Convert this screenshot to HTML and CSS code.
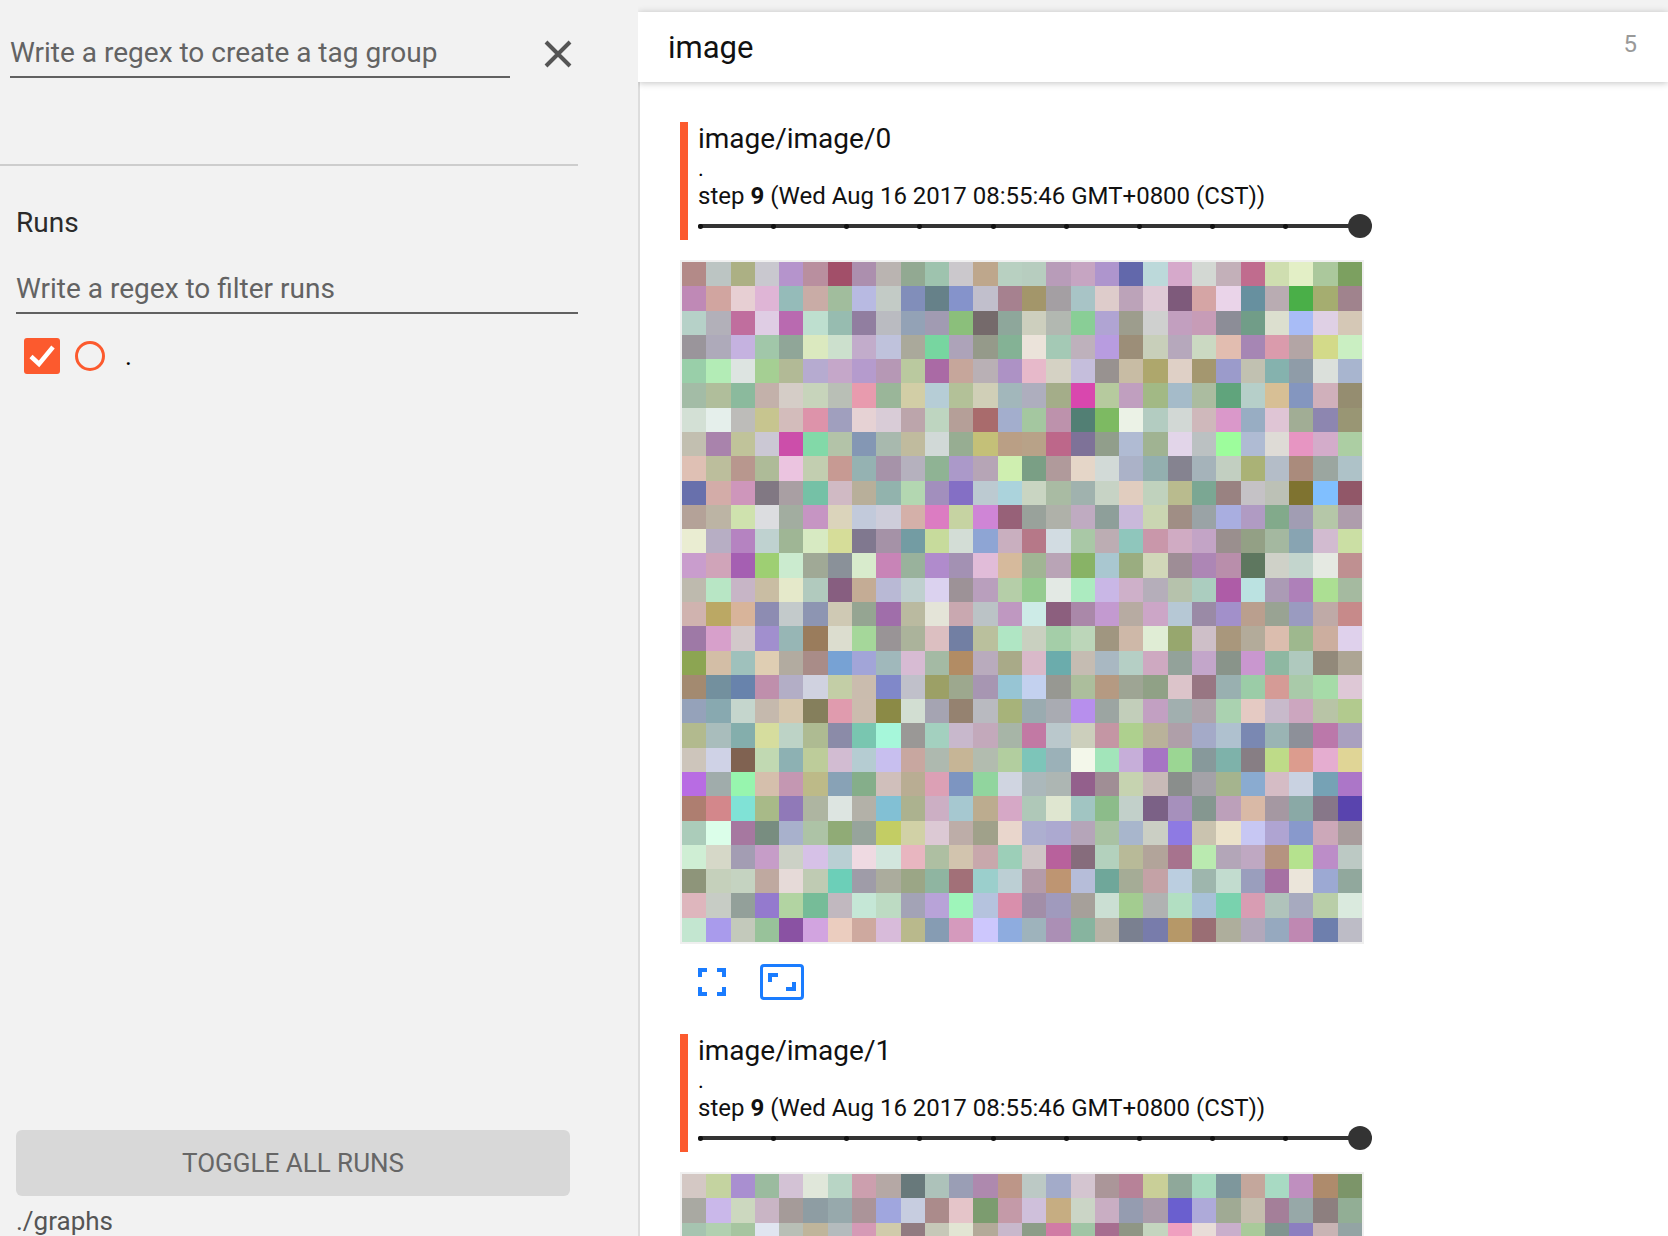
FILE: index.html
```html
<!DOCTYPE html>
<html lang="en">
<head>
<meta charset="utf-8">
<title>TensorBoard images</title>
<link rel="stylesheet" href="styles.css">
</head>
<body>
<div class="app">
  <aside class="sidebar">
    <div class="tag-filter">
      <div class="field tag-field">Write a regex to create a tag group</div>
      <svg class="close-icon" viewBox="0 0 28 28" aria-hidden="true"><path d="M2 2 26 26M26 2 2 26"/></svg>
    </div>
    <div class="sidebar-rule"></div>
    <section class="runs">
      <h3 class="runs-title">Runs</h3>
      <div class="field run-field">Write a regex to filter runs</div>
      <div class="run-row">
        <span class="check"><svg viewBox="0 0 36 36" aria-hidden="true"><path d="M7 18.5 15 26 29 9"/></svg></span>
        <span class="radio"></span>
        <span class="run-name">.</span>
      </div>
    </section>
    <div class="toggle-btn">TOGGLE ALL RUNS</div>
    <div class="logdir">./graphs</div>
  </aside>
  <main class="content">
    <div class="pane-top">
      <header class="pane-head"><span class="pane-title">image</span><span class="pane-count">5</span></header>
    </div>
    <div class="cards">
      <article class="card">
        <div class="card-head">
          <div class="tag-name">image/image/0</div>
          <div class="run-label">.</div>
          <div class="step-line">step <b>9</b> (Wed Aug 16 2017 08:55:46 GMT+0800 (CST))</div>
          <div class="slider"><span class="tick"></span><span class="tick"></span><span class="tick"></span><span class="tick"></span><span class="tick"></span><span class="tick"></span><span class="tick"></span><span class="tick"></span><span class="tick"></span><span class="knob"></span></div>
        </div>
        <div class="mosaic-frame"><div class="mosaic" data-image="0"></div></div>
        <div class="card-actions">
          <svg class="icon-actual" viewBox="0 0 28 28" aria-hidden="true"><path d="M9 2H2V9M19 2H26V9M2 19V26H9M26 19V26H19"/></svg>
          <span class="icon-fit"><svg viewBox="0 0 44 36" aria-hidden="true"><path d="M18 11H10V18M26 25H34V18"/></svg></span>
        </div>
      </article>
      <article class="card">
        <div class="card-head">
          <div class="tag-name">image/image/1</div>
          <div class="run-label">.</div>
          <div class="step-line">step <b>9</b> (Wed Aug 16 2017 08:55:46 GMT+0800 (CST))</div>
          <div class="slider"><span class="tick"></span><span class="tick"></span><span class="tick"></span><span class="tick"></span><span class="tick"></span><span class="tick"></span><span class="tick"></span><span class="tick"></span><span class="tick"></span><span class="knob"></span></div>
        </div>
        <div class="mosaic-frame"><div class="mosaic" data-image="1"></div></div>
      </article>
    </div>
  </main>
</div>
<script src="mosaic.js"></script>
</body>
</html>
```
FILE: styles.css
```css
* { box-sizing: border-box; }
html, body { margin: 0; height: 100%; overflow: hidden; }
body { font-family: Roboto, "Liberation Sans", sans-serif; background: #fff; color: #000; }

.app { display: flex; width: 1668px; height: 1236px; overflow: hidden; }

.sidebar {
  width: 638px; flex: none; height: 1236px; background: #f2f2f2;
  display: flex; flex-direction: column; overflow: hidden;
}
.tag-filter { display: flex; align-items: center; height: 78px; padding: 26px 0 0 10px; flex: none; }
.field { color: #636363; font-size: 28px; line-height: 34px; border-bottom: 2px solid #616161; }
.tag-field { width: 500px; height: 52px; padding-top: 10px; align-self: flex-end; }
.close-icon { width: 28px; height: 28px; margin-left: 34px; fill: none; stroke: #555; stroke-width: 4; margin-top: 4px; }
.sidebar-rule { width: 578px; height: 2px; background: #cdcdcd; margin-top: 86px; flex: none; }
.runs { padding: 0 0 0 16px; flex: none; width: 578px; }
.runs-title { margin: 40px 0 0; font-size: 28px; line-height: 34px; font-weight: 400; color: #2b2b2b; }
.run-field { margin-top: 29px; height: 45px; padding-top: 3px; }
.run-row { display: flex; align-items: center; padding: 24px 0 0 8px; }
.check { width: 36px; height: 36px; background: #fc5a2e; border-radius: 3px; display: block; flex: none; }
.check svg { display: block; width: 36px; height: 36px; fill: none; stroke: #fff; stroke-width: 4.500; }
.radio { width: 30px; height: 30px; border: 3px solid #fc5a2e; border-radius: 50%; margin-left: 15px; flex: none; }
.run-name { font-size: 26px; line-height: 36px; margin-left: 20px; color: #000; }
.toggle-btn {
  margin: auto 0 0 16px; width: 554px; height: 66px; flex: none; background: #d8d8d8; border-radius: 6px;
  color: #666; font-size: 26px; line-height: 66px; text-align: center;
}
.logdir { margin-left: 16px; margin-top: 8px; height: 32px; flex: none; font-size: 26px; line-height: 34px; color: #555; }

.content { flex: 1; min-width: 0; height: 1236px; background: #fff; overflow: hidden; display: flex; flex-direction: column; }
.pane-top { background: #f2f2f2; padding-top: 12px; position: relative; z-index: 1; flex: none; }
.pane-head {
  height: 70px; background: #fff; box-shadow: 0 1px 7px rgba(0,0,0,.24);
  display: flex; justify-content: space-between; align-items: flex-start; padding: 0 31px 0 30px;
}
.pane-title { font-size: 31px; line-height: 38px; margin-top: 17px; color: #111; }
.pane-count { font-size: 24px; line-height: 28px; margin-top: 18px; color: #999; }

.cards { flex: 1; min-height: 0; border-left: 2px solid #ddd; padding: 40px 0 0 40px; }
.card { width: 692px; }
.card-head { border-left: 8px solid #fc5a2e; height: 118px; padding-left: 10px; }
.tag-name { font-size: 28px; line-height: 34px; color: #111; }
.run-label { font-size: 22px; line-height: 22px; height: 22px; margin-top: 2px; color: #000; }
.step-line { font-size: 24px; line-height: 30px; margin-top: 1px; color: #111; }
.step-line b { font-weight: 700; }
.slider {
  position: relative; height: 4px; margin-top: 13px; width: 674px; background: #333; border-radius: 2px;
  display: flex; justify-content: space-between; align-items: center; padding-right: 84px;
}
.tick { width: 5px; height: 5px; background: #111; border-radius: 50%; }
.knob { position: absolute; right: 0; top: -10px; width: 24px; height: 24px; background: #333; border-radius: 50%; }
.mosaic-frame { width: 684px; height: 684px; margin-top: 20px; border: 2px solid #efefef; }
.mosaic { width: 680px; height: 680px; display: grid; grid-template-columns: repeat(28, 1fr); grid-template-rows: repeat(28, 1fr); }
.card-actions { display: flex; align-items: center; height: 36px; margin-top: 20px; padding-left: 18px; margin-bottom: 34px; }
.icon-actual { width: 28px; height: 28px; fill: none; stroke: #1a7cff; stroke-width: 4; flex: none; }
.icon-fit { display: block; width: 44px; height: 36px; margin-left: 34px; border: 3px solid #1a7cff; border-radius: 4px; flex: none; }
.icon-fit svg { display: block; margin: -3px; width: 44px; height: 36px; fill: none; stroke: #1a7cff; stroke-width: 4; }
```
FILE: mosaic.js
```js
var IMAGES = [
"b38a88 bcc5c3 acb084 c9c8cf b594cc b98f9f a24f69 ac8fae bab4b1 92a992 9ec3ae cbc8cc bea78c b8d0c1 b7cdbf b89cb9 c6a5c2 ae95cd 6268ab bcd9da d6a9cb d3d8d3 c3b0b9 c06c8e cfdeb0 e3efc6 abc89c 7ca060 " +
"bf89b6 d1a5a0 e7cfd3 dfb5d6 95bbb9 c9aca6 a1bd9d b8bae2 c3cbc6 818eba 668189 8593cb c1bfcc a6818f a3966a a49fa3 a8c4c6 decccb bca3b9 dfcad6 7e5a7b d5a5a5 ead4e9 67909f b9acb2 4aaf48 a5ad70 a0838d " +
"b6d1c8 b2b0b9 c06e9e dfcde4 b96ab0 bedfcf 97bcb0 917ea0 babbc1 93a2b6 a19bb2 8bbf7b 756a6b 8ea79b cdcfbe b2b8b1 89ce96 b0a4d3 9d9d8d cfd0cf c29fbf c79cb7 8c8d97 719d88 dcdfcf a8bcf6 dfd0e5 d5c8b6 " +
"9a959b aeaaba c5b2e0 a1c7a9 90a698 dbe9bf cce0cd c2accb bfc2dc aaa99b 77d6a0 ada3b9 959a8a 84b295 ebe3da a4c9b5 beb1bc b89ce0 9c8e78 c8cfba b6a8bc cbd9c2 e2bdb0 a686b4 da9bac b3a5a5 d3da89 caefc2 " +
"99cfa9 b3ecb6 dde4e1 a5cf93 b2ba96 b6abd0 c5a7c9 b59bcd b698b5 bac99f aa6aa5 c6a69b b9b0b5 ad92c5 e7b9ca d5d2c4 c5bedc 989290 c8bca4 aea76c dfd0c6 a4976f 9b9bcb c1c1b1 85b2ae 8f9ca8 dbe0db a8b5cf " +
"a3bca6 b0be9b 8bba9d c3b1aa d5cdc7 c7d4bb b9bfb6 e89bae 9ab699 d2cea6 b6cdd6 b3c198 d0cfb7 a2b7bb aeaebe a4ad89 d947ae b6ca9e c09fbf a2b985 a5bbc9 abbca0 60a47c b6cfc9 d7bf95 8496bf d0b0bb 958d70 " +
"d3e0d5 e5efeb bdbcb9 c7c58f d3bcbb dd93aa a09fbe e6d2d4 d9ccd7 bca5ab bed5c0 b59f98 a96b6c a3aecd a4c7a0 bd92ac 527f74 7dba62 ebf2e6 b3ccc1 d2d8d5 cfb8bb da98ca 98adc3 dfc5d5 a1ad95 8d86b0 999674 " +
"c2bfb0 a983ac c0c39a cbc8d4 cc4eaa 82d9a8 b3c3a8 8497b4 a8b9ae c0bb9e d1d9d7 97ad92 c4c078 ba9f85 b8a288 bd678a 7e7298 919e8b b0bbd3 a0b392 e2d5e9 bbc1c2 9dfd9c afbbd3 dedbd6 e795c2 d3acca accea3 " +
"dfc0b4 bcbe9c b8978e aebb98 ebc4e0 c2ceb0 c79a93 95b2b2 a693a9 b5b1be 8fb394 ab99c9 b6a5b6 cfefb0 7a9f85 b09a9b e5d6c8 d2dad7 abb2c8 93afaf 858390 a5b3ba c2cfc1 aab276 b4bdc8 aa8b7c 9ba6a0 aec2c8 " +
"6870ac d3aca8 ce96bb 817883 a99fa3 75c1a6 d0bac4 b8af9a 92b3ad b3d7b1 a28fbd 846fc5 bccad1 abd3dc c9d5c2 a9bba3 a0b2ae c7d3c5 e1cdbf c0d2bd b9bb8e 7ba793 998281 c5c2c6 bcc1b6 7f7330 80bfff 915768 " +
"b4a298 bcb4a4 cfe2ae dcdde0 a2ada0 c695c3 dbd4bb c2cadb cecdda d4b0a9 dc7cc2 c6d3a2 cf85d6 976178 99a29b afb1a9 bfabc1 8e9f9a c9b9da cad6b2 a08e85 9aa3a6 a9aee0 b09bc3 82aa8b a19db3 b5c7a8 ae9dac " +
"eaedd2 b7aec4 b583c1 bfd2d0 9fb695 d7eac2 d6dd99 80788f a592a7 739ca3 c7db9c d3ddd6 8ea5d4 c9afbf b67888 d2dce2 a9c8a6 bcadb3 8fc6bc c997aa d0abc3 c3a4c6 9a8f8e 93a085 a4b8a0 88a4b2 d2bbd0 cbdfa4 " +
"c99dcd d0a4b9 a55fb2 9ecf73 cbebcf a0a996 8a9199 d8ebcc c884b7 99b29c b08bcc a391b3 e1bcd9 d6ba9c a1b594 b9a4b6 88b366 a9c7d0 9aad80 d1d7b9 9e8d96 ad86b5 b98eab 5e775f cfd1c8 c3d5cd e5e9e2 bf9091 " +
"bebaae b8e6c5 c7b5c6 c9bda3 e5e9ca b1cabe 875e80 c4ac95 b9b9d5 bfd0cf dbd2ef 9d9297 b99fbd b5cea8 95cb90 e3e9e4 acebc0 c9b7e6 ceb0c9 b5aeba b6c2ac abcdbf ae5ca7 bbe2e1 ab9bb5 ae80b9 acdf93 a5baa0 " +
"d0b3af bba864 d8b49a 8d8cb2 c3cacb 8d95b2 cfc9b4 95a592 a06eaa babaa0 e4e4d8 c9a8b0 bbc3c6 bf98c1 cdebe7 8c5f7e aa88a9 c39ad0 b7aba2 cca6c7 b6c8d5 9a8aa6 a290ca ba9f8e 99a393 9a9bc0 bfaaa7 c78a8a " +
"9e79a6 d7a0cb d2c8ca a18fce 97b6b5 9a7c5c dcddcf a5d79a 999496 abb39b dcbfc1 727fa3 bac09d b0e6c4 c9d0c0 a4cea8 bcd6b9 a09680 ceb8a8 e0edd5 97a76e cebfc8 a9977c b3ab9a dbbdae 9eb88e ccae9f dfd1ec " +
"8ca552 d3bea6 9fc1bc dfceb3 b2aba0 a98c88 77a2d4 a2a5d8 a0b8bb d7bbd3 a4baa4 b28c64 b9abbd a9aa88 d9b9c9 6bacac c5bcb2 a9b8c2 b5cfc5 cea9c1 93a29a c3a6ca 89948a c997cf 8eb8a2 afc9be 92897a ada594 " +
"a38a70 73909e 6883ac bf8fac b3aec6 d0d2e0 c3cea6 cabcae 8088c9 c0c0ca 9ca066 9da88e a796b2 97c5d4 c3d1ef 979892 acbe9c b59a82 9ea594 90a186 dcc4ca 987683 99b0b0 9bcca7 d59b96 a9caa9 a6dba8 dec8d6 " +
"95a2ba 88a9b0 c5d6cd c5b9ad d6c7ae 857f5c e09bae cbbcae 8b8a46 d2ded2 a5a4b2 958270 b9bac0 a7b37a 9aabb0 a9abb2 b78fed 9ca5a2 c2ceba c2a0c2 a1afaf afa4ac aad2b0 e5cac3 c8bacb cca6bf b8c4a6 b2ca8e " +
"b2ba8e a9bdbc 84aeac d6dd9e bdd3c6 aebb92 8b8ba8 79c6b0 a6f7da 9a9896 a3d0bf c8b8cc c3a9bb a7b5a7 c279a4 bac8cc cccfbc c496a4 aed08e b9b29a af9fa9 a4aac8 afc1cf 7a88b2 9ab4b4 8d9099 bb78aa a9a0bf " +
"cdc5bb cfd2e6 806251 c1d9b2 8db1b3 bdcc9a d2bcd2 b5ccd2 c8bfef c8a7a0 aeb9af c6b596 b2bcaf b2ce9f 7dc5b9 9bb1b8 f3f7ea a2e5ba c6aed9 a675c4 9bd693 87999b 7eb2aa 877e84 bedb88 dc9c8e e5add0 e0d596 " +
"b86ce3 a0acab 97f5ae d5bfac c497b2 bdba88 88a2b6 85ae8a d0bfbb b9ad93 dca0b5 7d95c1 91d59e d0d5e1 abb8bb adb6b3 93608c a08e95 c6d3b0 c8bab7 8a8e8c a4a2a8 a5b48e 8aabd0 d5bcc5 c9d2e1 76a2b5 ac76c8 " +
"ae7e70 d3878b 80e2d6 a8ba88 9079b8 aeb5a1 dde5e1 b3b1a8 82c0d4 acb28f ccafc4 a6c8d0 bcac8f d6a8c6 afc8b8 dfe6d0 a1c5c2 8cbc8a c2d0ca 7b6186 a690bc 859790 bca0ba d9b9a6 a598a2 8aa9a6 877789 5944ae " +
"abccba dbfee9 a678a0 788d80 a8b1cc adc3a6 90ab76 97a49c c3cd64 d1d1a6 dcc9d4 bdada8 a0a18a e9d6cc adafd0 aca9d0 b5a5b9 a9c2a3 a8b6cc cbcfc4 8e7ae3 cac3af ebe2ca c7c7f3 afa4d2 8899cc cca8b9 a89c9c " +
"cfeed4 d6d8c8 a39db3 c69dc8 ccd1c6 d6c1e7 b9cfd3 efdae2 d2e6dd e8b6c0 aebfa2 d2c4ae c8a8ac 9ccfb8 cfc5c6 b8619c 866c7c b3d1bd b8ba98 b2a49a a7738e baeab0 b3a6b8 bfa8c2 b59380 b5e28e bc8dc8 bcc9c4 " +
"8e957a c5d0bb c5d3c1 bfa9a0 e6dad8 bfcbb3 6ccfb8 9f9ca8 abac9d 9ba686 8fb5a1 a27078 9bcfcc bccfd4 b49ba9 be9572 b6bdd9 6fa79a a5ac96 c4a2a6 bbcee0 9eb6ad c2dccf 9a9ebd a671a3 ebe5da 9ca9d3 91a89d " +
"deb6bd c7ccc5 93a09a 947ace b2d4a2 76bc98 c1b8bf c5e7d6 bddbc3 a3a3b6 b8a3d8 9ef5ba b5c3de d98fac a28ea8 a09abd a6a09a cbdfd3 a3cc90 b0b2b2 b2dfc2 a8c1d8 79d2ae d89db3 b0c3bb a7aabf b9cea8 daeade " +
"c3e6d0 a99bec c3c9bb 98c29a 8a52a3 d2a4e0 ebcdbf cea99f d8bbda b9b98c 869cb3 d59abd cdc7fd 8eacdf 9eb3bc ab8fb5 87b49f b8b3a6 7a8090 787cab b69868 9a6e74 aeae9c b2a8bb 96a9bf bf88b2 6e7fad bdbcc6",
"d4c8c4 c4d3a0 a98fd0 9bbb9f d3c2d5 e0e7da b8d5c5 cc9fae b5a8a5 68797b adc2ba 9a9eb5 ae89ae bd9688 bcc9c5 a3abc9 d4c5d0 ab9699 b78298 c9cf98 8fa89a a6d9bf 7e979c c4a79c a8dac3 bf8fbf ae8b6c 7c9569 " +
"a9a9a2 cab8ea ccd8bf c9b5c5 a59b99 8e9da3 97a9ac ab9499 a0a6de c7cde0 ab8b8b e5c5c9 7c9c6f c49aa8 cfc0db c6ad82 cbd5c6 c9aec3 959cb0 ab9cab 6a5fcf aeaad9 a0aa94 c5beae a47f99 97a8a8 8d7f7f 92ae95 " +
"a6c4b0 b1d0b0 a6c5a0 e0e5f0 b8bfb6 bfb59b b4bbbd d59ab6 d0cbab 917b81 c6c8b8 e2e5d3 b3aa99 c8b8cc 8c9d88 d17ba5 a0c5a5 a66e90 8f9685 c4d5bf f0a0c0 e8ddd8 c9afcc a9ca9a 819590 8c7fc0 c8b4b4 93a4a4"
];
document.querySelectorAll(".mosaic").forEach(function (grid) {
  IMAGES[+grid.dataset.image].split(" ").forEach(function (hex) {
    var cell = document.createElement("div");
    cell.style.background = "#" + hex;
    grid.appendChild(cell);
  });
});
```
